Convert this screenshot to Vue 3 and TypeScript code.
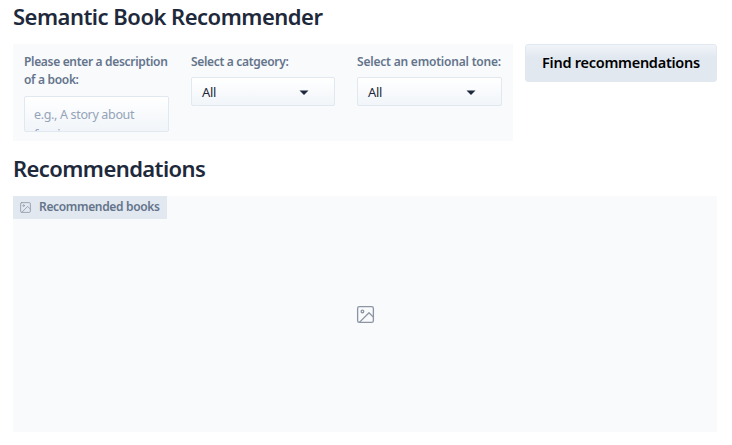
<script setup lang="ts">
import { ref } from 'vue'

interface Choice {
  id: string
  label: string
  value: string
}

const description = ref<string>('')
const choices = ref<Choice[]>([
  { id: 'category', label: 'Select a catgeory:', value: 'All' },
  { id: 'tone', label: 'Select an emotional tone:', value: 'All' },
])
</script>

<template>
  <main class="page">
    <h1 class="title">Semantic Book Recommender</h1>
    <div class="row">
      <section class="form">
        <label class="field">
          <span class="label">Please enter a description<br />of a book:</span>
          <textarea v-model="description" class="input" placeholder="e.g., A story about forgiveness"></textarea>
        </label>
        <div v-for="choice in choices" :key="choice.id" class="field">
          <span class="label" :class="'label-' + choice.id">{{ choice.label }}</span>
          <div class="select">
            <span>{{ choice.value }}</span>
            <svg class="arrow" viewBox="0 0 18 18"><path d="M4.5 7.5l4.5 4.5 4.5-4.5z" /></svg>
          </div>
        </div>
      </section>
      <button class="button"><span>Find recommendations</span></button>
    </div>
    <h1 class="title results">Recommendations</h1>
    <section class="gallery">
      <div class="tag">
        <svg class="picture small" viewBox="0 0 24 24">
          <rect x="3" y="3" width="18" height="18" rx="2" />
          <circle cx="8.5" cy="8.5" r="1.5" />
          <path d="M21 15l-5-5L5 21" />
        </svg>
        <span>Recommended books</span>
      </div>
      <div class="empty">
        <svg class="picture" viewBox="0 0 24 24">
          <rect x="3" y="3" width="18" height="18" rx="2" />
          <circle cx="8.5" cy="8.5" r="1.5" />
          <path d="M21 15l-5-5L5 21" />
        </svg>
      </div>
    </section>
  </main>
</template>

<style>
body {
  background: #fff;
}
</style>

<style scoped>
.page {
  box-sizing: border-box;
  height: 445px;
  padding: 3px 15px 13px 13px;
  display: flex;
  flex-direction: column;
  color: #1e293b;
  font-family: Candara, "Noto Sans", sans-serif;
}
.title {
  margin: 0;
  height: 27px;
  font-size: 22px;
  line-height: 27px;
  font-weight: 600;
  letter-spacing: -0.51px;
  white-space: nowrap;
}
.row {
  display: flex;
  align-items: flex-start;
  gap: 12px;
  margin-top: 14px;
}
.form {
  box-sizing: border-box;
  width: 500px;
  height: 97px;
  padding: 9px 11px;
  display: grid;
  grid-template-columns: 145px 144px 145px;
  column-gap: 22px;
  background: #f8fafc;
}
.field {
  display: block;
}
.label {
  display: block;
  margin-bottom: 6px;
  font-size: 12px;
  line-height: 18px;
  font-weight: 600;
  letter-spacing: -0.32px;
  color: #64748b;
  white-space: nowrap;
}
.label-tone {
  letter-spacing: -0.2px;
}
.input,
.select {
  box-sizing: border-box;
  width: 100%;
  border: 1px solid #e2e8f0;
  border-radius: 2px;
  background: linear-gradient(to bottom, #fff, #f1f5f9);
}
.input {
  display: block;
  height: 36px;
  margin-top: 7px;
  padding: 8px 9px;
  font: 400 12.5px/20px Candara, "Noto Sans", sans-serif;
  letter-spacing: -0.34px;
  color: #1e293b;
  resize: none;
  overflow: hidden;
  outline: none;
}
.input::placeholder {
  color: #94a3b8;
}
.select {
  height: 29px;
  padding: 0 21px 0 10px;
  display: flex;
  align-items: center;
  justify-content: space-between;
  font-size: 13px;
  line-height: 18px;
  letter-spacing: -0.3px;
}
.arrow {
  width: 18px;
  height: 18px;
  fill: #1e293b;
}
.button {
  box-sizing: border-box;
  width: 192px;
  height: 38px;
  padding: 0 0 2px;
  border: 1px solid #e2e8f0;
  border-radius: 3px;
  background: linear-gradient(to bottom, #f1f5f9 0%, #e2e8f0 35%);
  color: #000;
  font: 600 14.5px/22px Candara, "Noto Sans", sans-serif;
  letter-spacing: -0.27px;
  white-space: nowrap;
}
.results {
  margin-top: 14px;
  letter-spacing: -0.58px;
}
.gallery {
  margin-top: 14px;
  flex: 1;
  display: flex;
  flex-direction: column;
  background: #f8fafc;
  border-radius: 2px;
}
.tag {
  box-sizing: border-box;
  align-self: flex-start;
  width: 154px;
  height: 23px;
  padding: 0 0 1px 6px;
  display: flex;
  align-items: center;
  gap: 7px;
  background: #e2e8f0;
  color: #64748b;
  font-size: 12px;
  line-height: 18px;
  font-weight: 600;
  letter-spacing: -0.34px;
  white-space: nowrap;
}
.empty {
  flex: 1;
  display: flex;
  justify-content: center;
  padding-top: 85px;
}
.picture {
  width: 21px;
  height: 21px;
  flex: none;
  fill: none;
  stroke: #8d95a4;
  stroke-width: 1.5;
  stroke-linecap: round;
  stroke-linejoin: round;
}
.small {
  width: 13px;
  height: 13px;
}
</style>
